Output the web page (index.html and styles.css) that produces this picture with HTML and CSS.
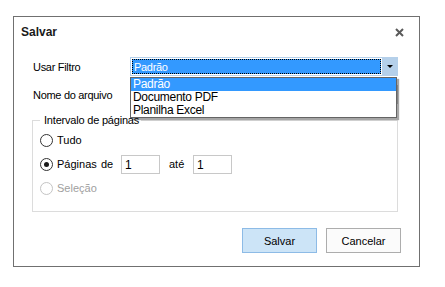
FILE: index.html
```html
<!DOCTYPE html>
<html>
<head>
    <title>Salvar</title>
    <link rel="stylesheet" href="styles.css">
</head>
<body>
    <div class="dialog">
        <div class="dialog-header">
            <span class="dialog-title">Salvar</span>
            <svg class="dialog-close" width="9" height="9" viewBox="0 0 9 9">
                <path d="M1 1 L8 8 M8 1 L1 8" stroke="#5a5a5a" stroke-width="2"/>
            </svg>
        </div>

        <div class="dialog-body">
            <div class="form-row">
                <label class="form-label">Usar Filtro</label>
                <div class="combo">
                    <div class="combo-value"><span>Padrão</span></div>
                    <div class="combo-arrow"></div>

                    <!-- open list lies over the next row -->
                    <ul class="combo-list">
                        <li class="combo-item combo-item-selected">Padrão</li>
                        <li class="combo-item">Documento PDF</li>
                        <li class="combo-item">Planilha Excel</li>
                    </ul>
                </div>
            </div>

            <div class="form-row form-row-second">
                <label class="form-label">Nome do arquivo</label>
                <input class="text-input text-input-wide" type="text">
            </div>

            <fieldset class="group-box">
                <legend>Intervalo de páginas</legend>
                <div class="radio-row">
                    <span class="radio"></span>
                    <span>Tudo</span>
                </div>
                <div class="radio-row">
                    <span class="radio radio-checked"></span>
                    <span class="radio-text">Páginas</span>
                    <span class="range-word">de</span>
                    <input class="text-input text-input-small" type="text" value="1">
                    <span class="range-word range-word-ate">até</span>
                    <input class="text-input text-input-small" type="text" value="1">
                </div>
                <div class="radio-row radio-row-disabled">
                    <span class="radio"></span>
                    <span>Seleção</span>
                </div>
            </fieldset>

            <div class="button-row">
                <button class="btn btn-default">Salvar</button>
                <button class="btn">Cancelar</button>
            </div>
        </div>
    </div>
</body>
</html>
```

FILE: styles.css
```css
body {
    margin: 0;
    padding: 0;
    background-color: #ffffff;
    font-family: "Liberation Sans", Arial, sans-serif;
    font-size: 11px;
    color: #000000;
}

.dialog {
    margin: 16px 0 0 13px;
    width: 405px;
    height: 249px;
    border: 1px solid #707070;
    background-color: #ffffff;
}

/* Title bar */
.dialog-header {
    display: flex;
    align-items: center;
    justify-content: space-between;
    height: 29px;
    padding: 0 15px 0 7px;
}

.dialog-title {
    font-size: 12px;
    font-weight: bold;
    color: #1a1a1a;
}

.dialog-close {
    display: block;
    margin-top: 2px;
}

.dialog-body {
    padding: 0 21px 0 19px;
}

.form-row {
    display: flex;
    align-items: center;
    height: 19px;
    margin-top: 11px;
}

.form-row-second {
    margin-top: 9px;
}

.form-label {
    width: 97px;
    flex-shrink: 0;
    letter-spacing: -0.3px;
}

/* Combo box */
.combo {
    position: relative;
    flex: 1;
    display: flex;
    height: 19px;
    box-sizing: border-box;
    border: 1px solid #b5d0ea;
    background-color: #b5d0ea;
}

.combo-value {
    flex: 1;
    padding: 1px;
    background-color: #ffffff;
}

.combo-value span {
    display: block;
    height: 15px;
    line-height: 15px;
    padding-left: 1px;
    box-sizing: border-box;
    border: 1px dotted #000000;
    background-color: #3399ff;
    color: #ffffff;
    letter-spacing: -0.3px;
}

.combo-arrow {
    width: 15px;
    position: relative;
}

.combo-arrow::after {
    content: "";
    position: absolute;
    left: 5px;
    top: 7px;
    border-left: 3px solid transparent;
    border-right: 3px solid transparent;
    border-top: 3px solid #000000;
}

.combo-list {
    position: absolute;
    top: 19px;
    left: -1px;
    width: 267px;
    margin: 0;
    padding: 0;
    list-style: none;
    box-sizing: border-box;
    border: 1px solid #646464;
    background-color: #ffffff;
    box-shadow: 2px 2px 1px rgba(0, 0, 0, 0.35);
    z-index: 2;
}

.combo-item {
    height: 13px;
    line-height: 13px;
    padding-left: 2px;
    font-size: 12px;
    letter-spacing: -0.3px;
}

.combo-item-selected {
    background-color: #3399ff;
    color: #ffffff;
}

/* Inputs */
.text-input {
    box-sizing: border-box;
    height: 19px;
    border: 1px solid #c8c8c8;
    font-family: "Liberation Sans", Arial, sans-serif;
    font-size: 12px;
    padding: 1px 3px 0;
    margin: 0;
    outline: none;
}

.text-input-wide {
    flex: 1;
}

.text-input-small {
    width: 39px;
}

/* Group box */
.group-box {
    margin: 10px 0 0 -1px;
    padding: 1px 7px 11px;
    border: 1px solid #dcdcdc;
}

.group-box legend {
    padding: 0 2px 0 4px;
    line-height: 13px;
    letter-spacing: -0.2px;
}

.radio-row {
    display: flex;
    align-items: center;
    height: 24px;
}

.radio-row-disabled {
    color: #a0a0a0;
}

.radio {
    width: 11px;
    height: 11px;
    border: 1px solid #333333;
    border-radius: 50%;
    margin-right: 4px;
    position: relative;
    background-color: #ffffff;
}

.radio-row-disabled .radio {
    border-color: #c4c4c4;
}

.radio-checked::after {
    content: "";
    position: absolute;
    left: 3px;
    top: 3px;
    width: 5px;
    height: 5px;
    border-radius: 50%;
    background-color: #1a1a1a;
}

.radio-text {
    width: 44px;
}

.range-word {
    width: 20px;
}

.range-word-ate {
    margin-left: 9px;
    width: 24px;
}

/* Buttons */
.button-row {
    display: flex;
    justify-content: flex-end;
    gap: 9px;
    margin: 16px -3px 0 0;
}

.btn {
    width: 75px;
    height: 25px;
    box-sizing: border-box;
    border: 1px solid #adadad;
    background-color: #fbfbfb;
    font-family: "Liberation Sans", Arial, sans-serif;
    font-size: 11px;
    color: #000000;
    padding: 0;
}

.btn-default {
    border-color: #8dbbe6;
    background-color: #cce4f7;
}
```
